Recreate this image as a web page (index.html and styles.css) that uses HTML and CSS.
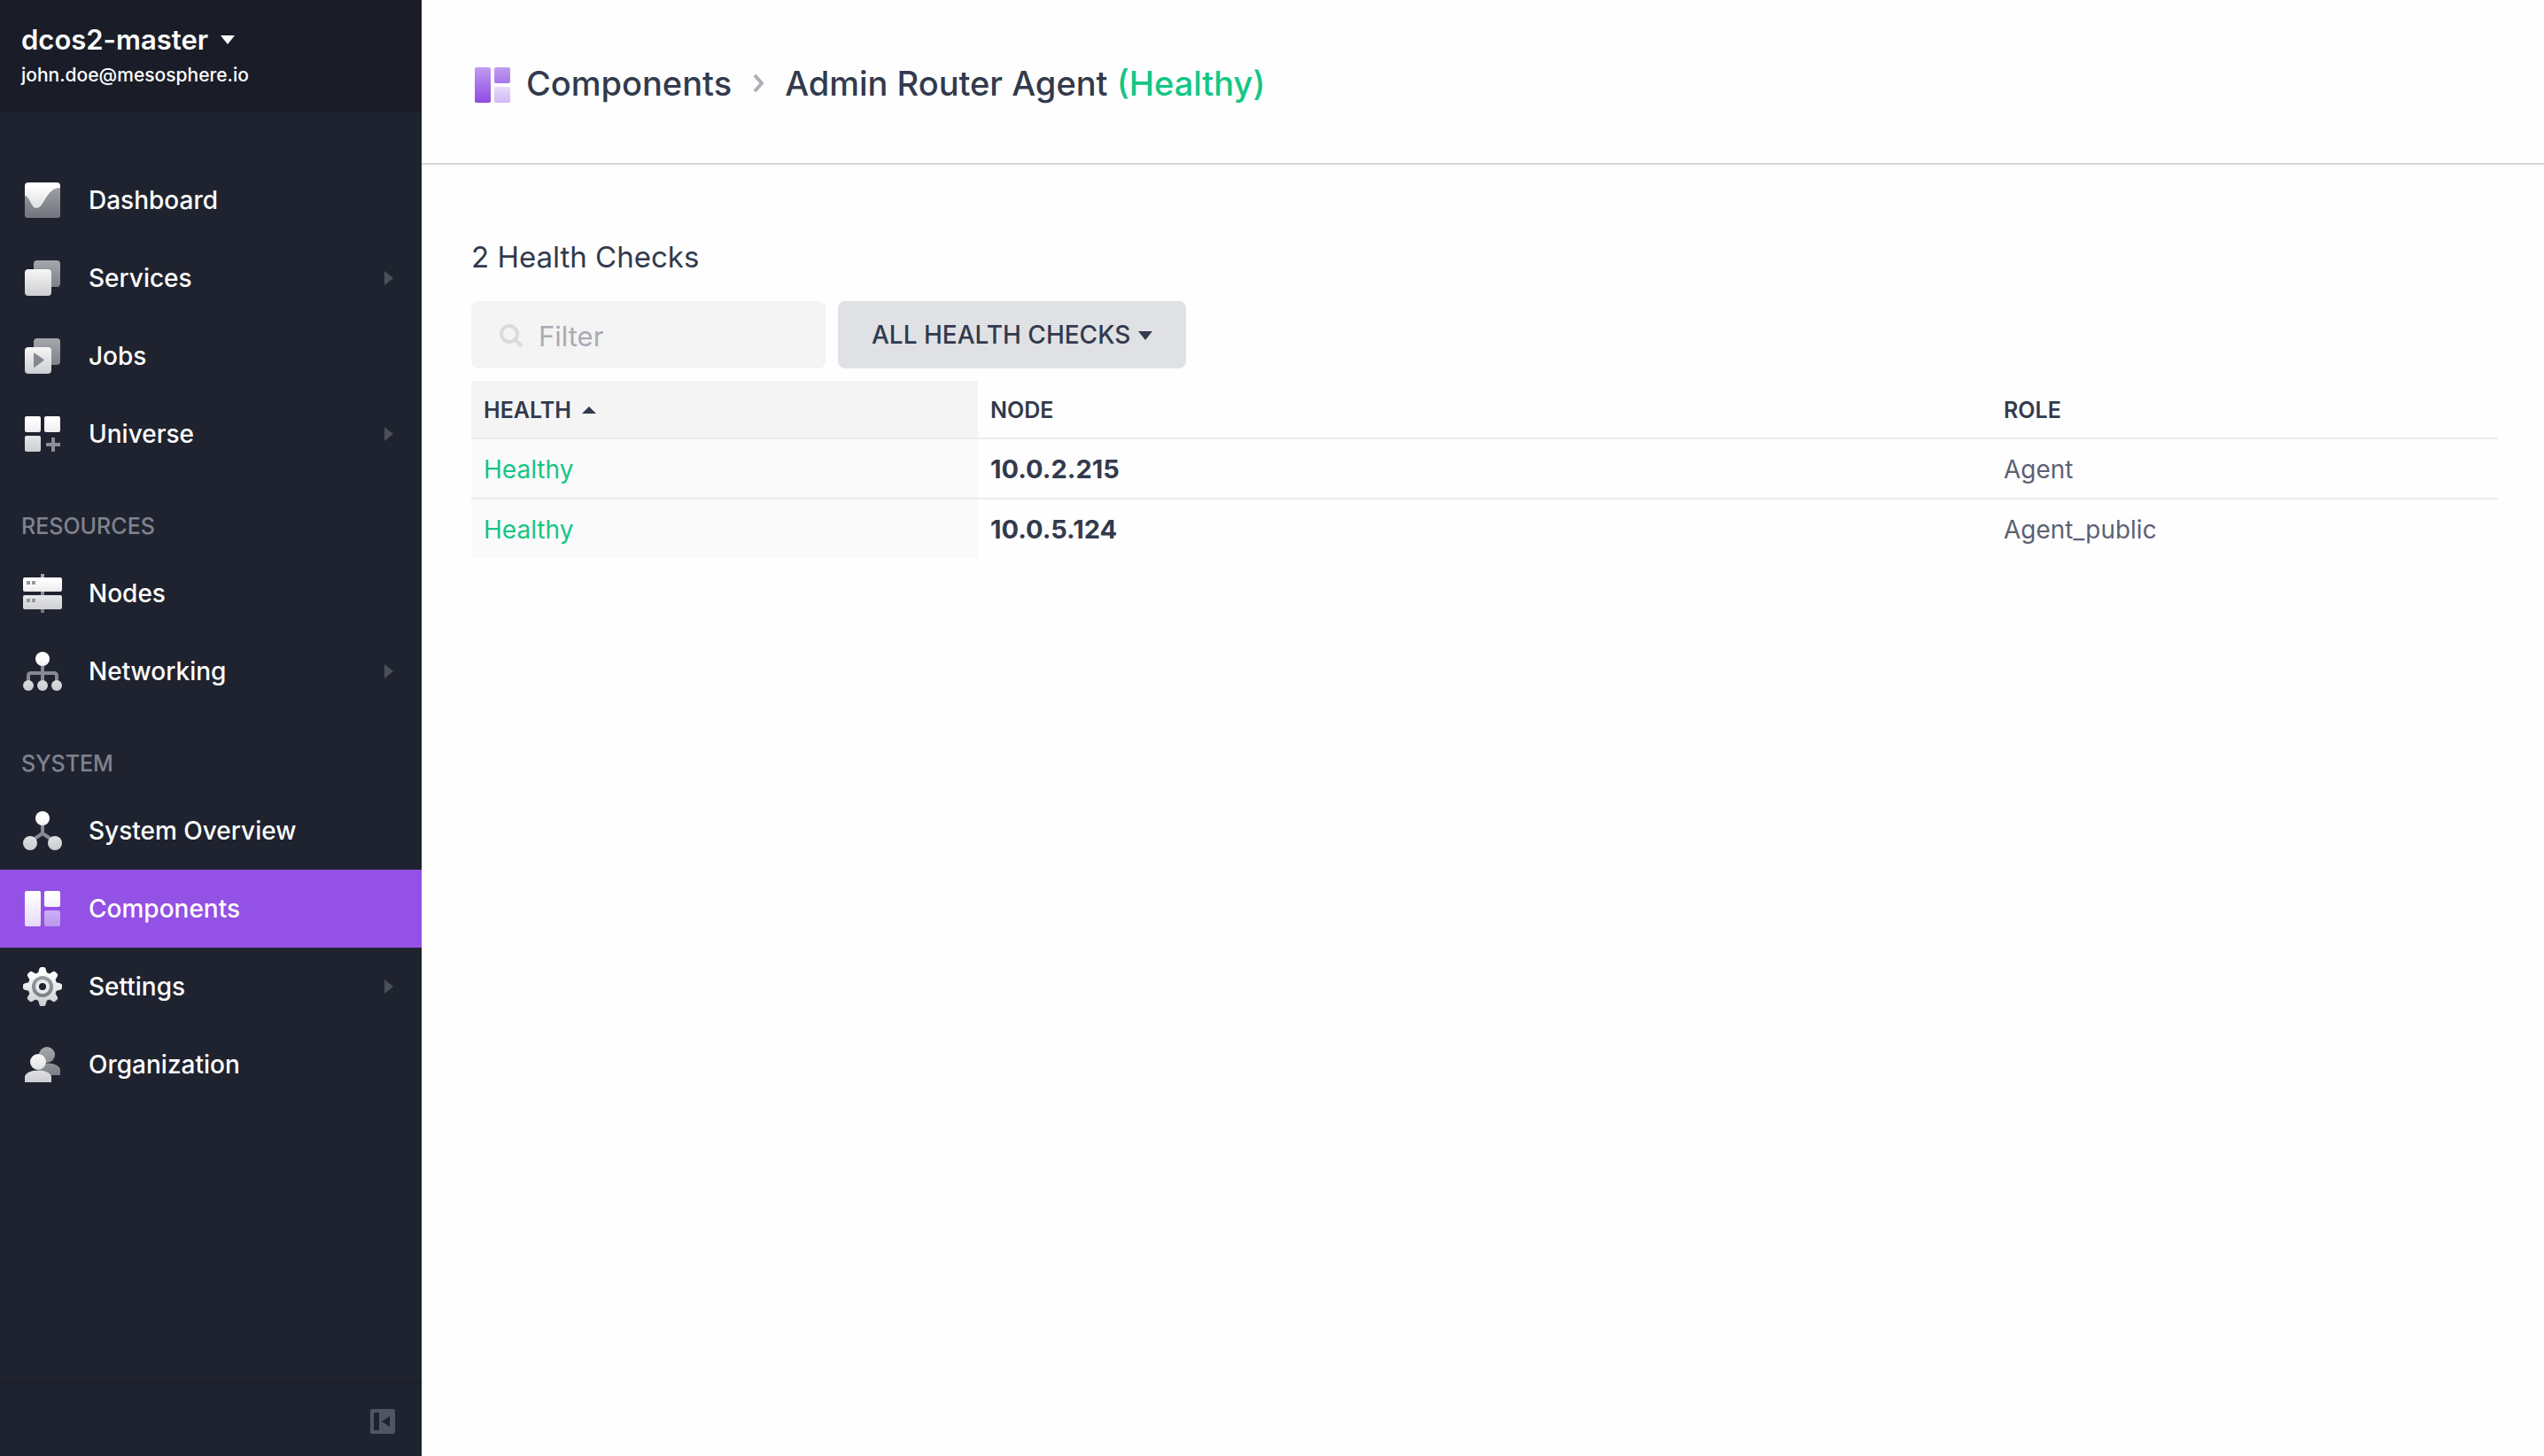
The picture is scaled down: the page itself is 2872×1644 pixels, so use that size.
FILE: index.html
```html
<!DOCTYPE html>
<html lang="en">
<head>
<meta charset="utf-8">
<meta name="viewport" content="width=device-width, initial-scale=1">
<title>Admin Router Agent - Components</title>
<link rel="stylesheet" href="styles.css">
</head>
<body>
<svg class="defs" width="0" height="0" aria-hidden="true">
  <defs>
    <linearGradient id="light" gradientUnits="userSpaceOnUse" x1="0" y1="4" x2="0" y2="44"><stop offset="0.1" stop-color="#ffffff"/><stop offset="1" stop-color="#cdced1"/></linearGradient>
    <linearGradient id="dim" gradientUnits="userSpaceOnUse" x1="0" y1="4" x2="0" y2="44"><stop offset="0" stop-color="#a5a7ac"/><stop offset="1" stop-color="#71747d"/></linearGradient>
    <linearGradient id="on-purple" gradientUnits="userSpaceOnUse" x1="0" y1="4" x2="0" y2="44"><stop offset="0.1" stop-color="#ffffff"/><stop offset="1" stop-color="#e6d8f9"/></linearGradient>
    <linearGradient id="on-purple-dim" gradientUnits="userSpaceOnUse" x1="0" y1="26" x2="0" y2="44"><stop offset="0" stop-color="#ccaff3"/><stop offset="1" stop-color="#bd97f0"/></linearGradient>
    <linearGradient id="purple" gradientUnits="userSpaceOnUse" x1="0" y1="4" x2="0" y2="44"><stop offset="0" stop-color="#c09bf0"/><stop offset="1" stop-color="#8f4ae3"/></linearGradient>
    <linearGradient id="purple-dim" gradientUnits="userSpaceOnUse" x1="0" y1="26" x2="0" y2="44"><stop offset="0" stop-color="#e6daf8"/><stop offset="1" stop-color="#d2b8f4"/></linearGradient>
  </defs>
</svg>
<div class="app">
  <aside class="sidebar">
    <header class="account">
      <button class="cluster" type="button">dcos2-master
        <svg class="caret-down" viewBox="0 0 16 10" aria-hidden="true"><path d="M0 0H16L8 10Z"/></svg>
      </button>
      <span class="email">john.doe@mesosphere.io</span>
    </header>
    <nav class="nav">
      <a class="item" href="#dashboard">
        <svg class="icon" viewBox="0 0 48 48" aria-hidden="true"><rect x="4" y="4" width="40" height="40" rx="4" fill="url(#light)"/><path fill="url(#dim)" d="M4 19C10 20 11 33 17 33C26 33 28 10 44 10V40A4 4 0 0 1 40 44H8A4 4 0 0 1 4 40Z"/></svg>
        <span class="name">Dashboard</span>
      </a>
      <a class="item" href="#services">
        <svg class="icon" viewBox="0 0 48 48" aria-hidden="true"><rect x="14" y="4" width="30" height="30" rx="4" fill="url(#dim)"/><rect x="4" y="14" width="30" height="30" rx="4" fill="url(#light)"/></svg>
        <span class="name">Services</span>
        <svg class="more" viewBox="0 0 10 16" aria-hidden="true"><path d="M0 0L10 8L0 16Z"/></svg>
      </a>
      <a class="item" href="#jobs">
        <svg class="icon" viewBox="0 0 48 48" aria-hidden="true"><rect x="14" y="4" width="30" height="30" rx="4" fill="url(#dim)"/><rect x="4" y="14" width="30" height="30" rx="4" fill="url(#light)"/><path fill="#858891" d="M14 21.500Q14 20 15.500 21L25 27.500Q26 28.500 25 29.500L15.500 36.500Q14 37.500 14 36Z"/></svg>
        <span class="name">Jobs</span>
      </a>
      <a class="item" href="#universe">
        <svg class="icon" viewBox="0 0 48 48" aria-hidden="true"><g fill="url(#light)"><rect x="4" y="4" width="18" height="18" rx="2"/><rect x="26" y="4" width="18" height="18" rx="2"/><rect x="4" y="26" width="18" height="18" rx="2"/></g><path fill="#8b8e96" d="M34 28H38V34H44V38H38V44H34V38H28V34H34Z"/></svg>
        <span class="name">Universe</span>
        <svg class="more" viewBox="0 0 10 16" aria-hidden="true"><path d="M0 0L10 8L0 16Z"/></svg>
      </a>

      <h2 class="group">RESOURCES</h2>
      <a class="item" href="#nodes">
        <svg class="icon" viewBox="0 0 48 48" aria-hidden="true"><rect x="22" y="2" width="4" height="44" fill="url(#dim)"/><g fill="url(#light)"><rect x="2" y="6" width="44" height="16" rx="2"/><rect x="2" y="26" width="44" height="16" rx="2"/></g><path fill="#94969d" d="M6 10h4v4h-4zM12 10h4v4h-4zM6 30h4v4h-4zM12 30h4v4h-4z"/></svg>
        <span class="name">Nodes</span>
      </a>
      <a class="item" href="#networking">
        <svg class="icon" viewBox="0 0 48 48" aria-hidden="true"><path fill="none" stroke="#868a90" stroke-width="4" d="M24 16V36M8 36V29Q8 26 11 26H37Q40 26 40 29V36"/><g fill="url(#light)"><circle cx="24" cy="10" r="8"/><circle cx="8" cy="40" r="6"/><circle cx="24" cy="40" r="6"/><circle cx="40" cy="40" r="6"/></g></svg>
        <span class="name">Networking</span>
        <svg class="more" viewBox="0 0 10 16" aria-hidden="true"><path d="M0 0L10 8L0 16Z"/></svg>
      </a>

      <h2 class="group">SYSTEM</h2>
      <a class="item" href="#overview">
        <svg class="icon" viewBox="0 0 48 48" aria-hidden="true"><path fill="none" stroke="#868a90" stroke-width="4" d="M24 16V27M12 35L24 27L36 35"/><g fill="url(#light)"><circle cx="24" cy="10" r="8"/><circle cx="10" cy="38" r="8"/><circle cx="38" cy="38" r="8"/></g></svg>
        <span class="name">System Overview</span>
      </a>
      <a class="item active" href="#components" aria-current="page">
        <svg class="icon" viewBox="0 0 48 48" aria-hidden="true"><g fill="url(#on-purple)"><rect x="4" y="4" width="18" height="40" rx="2"/><rect x="26" y="4" width="18" height="18" rx="2"/></g><rect x="26" y="26" width="18" height="18" rx="2" fill="url(#on-purple-dim)"/></svg>
        <span class="name">Components</span>
      </a>
      <a class="item" href="#settings">
        <svg class="icon" viewBox="0 0 48 48" aria-hidden="true">
          <g fill="url(#light)"><circle cx="24" cy="24" r="16.500"/>
          <path d="M19 9L20.500 3.500Q21 2 22.500 2H25.500Q27 2 27.500 3.500L29 9ZM19 39L20.500 44.500Q21 46 22.500 46H25.500Q27 46 27.500 44.500L29 39ZM9 19L3.500 20.500Q2 21 2 22.500V25.500Q2 27 3.500 27.500L9 29ZM39 19L44.500 20.500Q46 21 46 22.500V25.500Q46 27 44.500 27.500L39 29Z"/>
          <path d="M9.900 17L7 12Q6.300 10.600 7.400 9.500L9.500 7.400Q10.600 6.300 12 7L17 9.900ZM31 9.900L36 7Q37.400 6.300 38.500 7.400L40.600 9.500Q41.700 10.600 41 12L38.100 17ZM38.100 31L41 36Q41.700 37.400 40.600 38.500L38.500 40.600Q37.400 41.700 36 41L31 38.100ZM17 38.100L12 41Q10.600 41.700 9.500 40.600L7.400 38.500Q6.300 37.400 7 36L9.900 31Z"/></g>
          <circle cx="24" cy="24" r="12" fill="url(#dim)"/><circle cx="24" cy="24" r="8" fill="#e9eaeb"/><circle cx="24" cy="24" r="4" fill="#1f232f"/></svg>
        <span class="name">Settings</span>
        <svg class="more" viewBox="0 0 10 16" aria-hidden="true"><path d="M0 0L10 8L0 16Z"/></svg>
      </a>
      <a class="item" href="#organization">
        <svg class="icon" viewBox="0 0 48 48" aria-hidden="true"><g fill="url(#dim)"><circle cx="29" cy="13" r="9"/><path d="M20 36V26Q24 22 31 22.500C38 23 44 26 44 30V36Z"/></g><g fill="url(#light)"><circle cx="19" cy="21" r="9"/><path d="M4 44V38C4 34 11 30.500 19 30.500S34 34 34 38V44Z"/></g></svg>
        <span class="name">Organization</span>
      </a>
    </nav>
    <footer class="dock">
      <button class="collapse" type="button" aria-label="Collapse sidebar">
        <svg viewBox="0 0 28 28" width="28" height="28" aria-hidden="true"><path fill="#505562" fill-rule="evenodd" d="M2 0H26Q28 0 28 2V26Q28 28 26 28H2Q0 28 0 26V2Q0 0 2 0ZM4 4V24H10V4ZM22 8L13 14L22 20Z"/></svg>
      </button>
    </footer>
  </aside>

  <main class="page">
    <header class="page-header">
      <svg class="icon" viewBox="0 0 48 48" aria-hidden="true"><g fill="url(#purple)"><rect x="4" y="4" width="18" height="40" rx="2"/><rect x="26" y="4" width="18" height="18" rx="2"/></g><rect x="26" y="26" width="18" height="18" rx="2" fill="url(#purple-dim)"/></svg>
      <h1 class="crumbs">
        <a href="#components">Components</a>
        <svg class="chevron" viewBox="0 0 12 20" aria-hidden="true"><path d="M2 1L10 10L2 19"/></svg>
        <span>Admin Router Agent <span class="healthy">(Healthy)</span></span>
      </h1>
    </header>
    <section class="content">
      <h2 class="count">2 Health Checks</h2>
      <form class="filters">
        <label class="search">
          <svg viewBox="0 0 28 28" aria-hidden="true"><circle cx="11" cy="11" r="9"/><path d="M17.500 17.500L25 25"/></svg>
          <input type="text" placeholder="Filter" aria-label="Filter">
        </label>
        <div class="dropdown">
          <select aria-label="Health filter">
            <option>ALL HEALTH CHECKS</option>
            <option>HEALTHY</option>
            <option>UNHEALTHY</option>
          </select>
          <svg class="caret-down" viewBox="0 0 16 10" aria-hidden="true"><path d="M0 0H16L8 10Z"/></svg>
        </div>
      </form>
      <table class="checks">
        <colgroup><col class="quarter"><col class="half"><col class="quarter"></colgroup>
        <thead>
          <tr>
            <th scope="col" aria-sort="ascending"><button class="sort" type="button">HEALTH<svg viewBox="0 0 16 8" aria-hidden="true"><path d="M0 8H16L8 0Z"/></svg></button></th>
            <th scope="col">NODE</th>
            <th scope="col">ROLE</th>
          </tr>
        </thead>
        <tbody>
          <tr><td class="healthy">Healthy</td><td class="node">10.0.2.215</td><td>Agent</td></tr>
          <tr><td class="healthy">Healthy</td><td class="node">10.0.5.124</td><td>Agent_public</td></tr>
        </tbody>
      </table>
    </section>
  </main>
</div>
</body>
</html>
```
FILE: styles.css
```css
* { box-sizing: border-box; }

body {
  margin: 0;
  background: #fefefe;
  color: #323a4d;
  font-family: Inter, "Liberation Sans", sans-serif;
  font-size: 28px;
  line-height: 40px;
}

button, input, select {
  margin: 0;
  padding: 0;
  border: 0;
  background: none;
  color: inherit;
  font: inherit;
}

a { color: inherit; text-decoration: none; }
h1, h2 { margin: 0; font-weight: 400; }
svg { display: block; flex: none; }

.defs { position: absolute; }

.app { display: flex; min-height: 100vh; }

/* Sidebar */
.sidebar {
  display: flex;
  flex: none;
  flex-direction: column;
  width: 476px;
  background: #1f232f;
  color: #fff;
}

.account {
  display: flex;
  flex-direction: column;
  align-items: flex-start;
  height: 126px;
  padding: 25px 24px 0;
  background: #1a1d27;
}

.cluster {
  display: flex;
  align-items: center;
  gap: 14px;
  font-size: 31px;
  font-weight: 600;
}

.email { font-size: 21px; font-weight: 500; }

.caret-down { width: 16px; height: 10px; fill: currentColor; }

.nav { flex: 1; padding-top: 56px; }

.item {
  display: flex;
  align-items: center;
  height: 88px;
  padding: 0 32px 0 24px;
  font-weight: 500;
}

.active { background: #9351e5; }

.icon { width: 48px; height: 48px; }

.name { flex: 1; margin-left: 28px; }

.more { width: 10px; height: 16px; fill: #4b4f5a; }

.group {
  padding: 40px 24px 12px;
  color: #7f838f;
  font-size: 25px;
  font-weight: 500;
}

.dock {
  display: flex;
  align-items: center;
  justify-content: flex-end;
  height: 84px;
  padding: 4px 30px 0;
  border-top: 2px solid #1a1d27;
}

/* Page */
.page { flex: 1; min-width: 0; }

.page-header {
  display: flex;
  align-items: center;
  gap: 14px;
  height: 186px;
  padding: 8px 56px 0;
  border-bottom: 2px solid #d5d6da;
}

.crumbs {
  display: flex;
  align-items: center;
  padding-bottom: 4px;
  font-size: 38px;
  font-weight: 500;
}

.chevron {
  width: 12px;
  height: 20px;
  margin: 0 24px;
  fill: none;
  stroke: #adb0b7;
  stroke-width: 4;
}

.healthy { color: #14c684; }

.content { padding: 80px 52px 0 56px; }

.count { padding: 4px 0 30px; font-size: 33px; }

.filters { display: flex; gap: 14px; margin-bottom: 14px; }

.search {
  display: flex;
  align-items: center;
  gap: 16px;
  width: 400px;
  height: 76px;
  padding: 4px 32px 0;
  border-radius: 8px;
  background: #f4f4f5;
}

.search svg {
  width: 28px;
  height: 28px;
  fill: none;
  stroke: #dadbdd;
  stroke-width: 4;
}

.search input { flex: 1; min-width: 0; font-size: 31px; outline: 0; }
.search input::placeholder { color: #a8abb3; opacity: 1; }

.dropdown { position: relative; }

.dropdown select {
  height: 76px;
  padding: 0 62px 0 38px;
  border-radius: 8px;
  background: #e0e1e4;
  font-weight: 500;
  appearance: none;
}

.dropdown .caret-down {
  position: absolute;
  top: 34px;
  right: 38px;
  pointer-events: none;
}

.checks {
  width: 100%;
  border-collapse: separate;
  border-spacing: 0;
  table-layout: fixed;
}

.quarter { width: 25%; }
.half { width: 50%; }

.checks th, .checks td {
  padding: 14px 14px 12px;
  border-bottom: 2px solid #ebecec;
  text-align: left;
}

.checks th { padding: 13px 14px 11px; font-size: 25px; font-weight: 600; }
.checks th:first-child { background: #f4f4f5; }

.checks td { color: #5d6173; }
.checks td:first-child { background: #fafafb; }
.checks tr:last-child td { border-bottom: 0; }
.checks thead th { border-bottom: 2px solid #ebecec; }
.checks .healthy { color: #14c684; }
.checks .node { color: #323a4d; font-size: 29px; font-weight: 700; }

.sort { display: flex; align-items: center; gap: 12px; }
.sort svg { width: 16px; height: 8px; fill: currentColor; }
```
